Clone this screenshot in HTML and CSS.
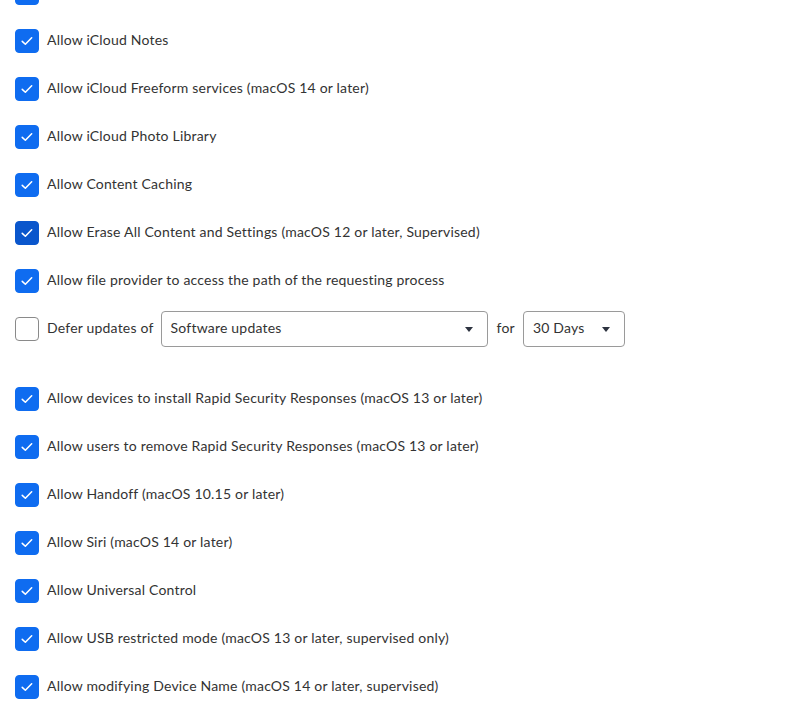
FILE: index.html
```html
<!DOCTYPE html>
<html>
<head>
<meta charset="utf-8">
<link rel="stylesheet" href="styles.css">
</head>
<body>
<div class="list">
  <div class="row"><span class="cb on"><svg viewBox="0 0 24 24"><path d="M6.8 12.4l3.4 3.1 6.9-7"/></svg></span></div>
  <div class="row"><span class="cb on"><svg viewBox="0 0 24 24"><path d="M6.8 12.4l3.4 3.1 6.9-7"/></svg></span><span class="label">Allow iCloud Notes</span></div>
  <div class="row"><span class="cb on"><svg viewBox="0 0 24 24"><path d="M6.8 12.4l3.4 3.1 6.9-7"/></svg></span><span class="label">Allow iCloud Freeform services (macOS 14 or later)</span></div>
  <div class="row"><span class="cb on"><svg viewBox="0 0 24 24"><path d="M6.8 12.4l3.4 3.1 6.9-7"/></svg></span><span class="label">Allow iCloud Photo Library</span></div>
  <div class="row"><span class="cb on"><svg viewBox="0 0 24 24"><path d="M6.8 12.4l3.4 3.1 6.9-7"/></svg></span><span class="label">Allow Content Caching</span></div>
  <div class="row"><span class="cb on focus"><svg viewBox="0 0 24 24"><path d="M6.8 12.4l3.4 3.1 6.9-7"/></svg></span><span class="label">Allow Erase All Content and Settings (macOS 12 or later, Supervised)</span></div>
  <div class="row"><span class="cb on"><svg viewBox="0 0 24 24"><path d="M6.8 12.4l3.4 3.1 6.9-7"/></svg></span><span class="label">Allow file provider to access the path of the requesting process</span></div>
  <div class="row defer">
    <span class="cb"></span><span class="label">Defer updates of</span>
    <div class="select wide"><span>Software updates</span><span class="caret"></span></div>
    <span class="label for">for</span>
    <div class="select narrow"><span>30 Days</span><span class="caret"></span></div>
  </div>
  <div class="row"><span class="cb on"><svg viewBox="0 0 24 24"><path d="M6.8 12.4l3.4 3.1 6.9-7"/></svg></span><span class="label">Allow devices to install Rapid Security Responses (macOS 13 or later)</span></div>
  <div class="row"><span class="cb on"><svg viewBox="0 0 24 24"><path d="M6.8 12.4l3.4 3.1 6.9-7"/></svg></span><span class="label">Allow users to remove Rapid Security Responses (macOS 13 or later)</span></div>
  <div class="row"><span class="cb on"><svg viewBox="0 0 24 24"><path d="M6.8 12.4l3.4 3.1 6.9-7"/></svg></span><span class="label">Allow Handoff (macOS 10.15 or later)</span></div>
  <div class="row"><span class="cb on"><svg viewBox="0 0 24 24"><path d="M6.8 12.4l3.4 3.1 6.9-7"/></svg></span><span class="label">Allow Siri (macOS 14 or later)</span></div>
  <div class="row"><span class="cb on"><svg viewBox="0 0 24 24"><path d="M6.8 12.4l3.4 3.1 6.9-7"/></svg></span><span class="label">Allow Universal Control</span></div>
  <div class="row"><span class="cb on"><svg viewBox="0 0 24 24"><path d="M6.8 12.4l3.4 3.1 6.9-7"/></svg></span><span class="label">Allow USB restricted mode (macOS 13 or later, supervised only)</span></div>
  <div class="row"><span class="cb on"><svg viewBox="0 0 24 24"><path d="M6.8 12.4l3.4 3.1 6.9-7"/></svg></span><span class="label">Allow modifying Device Name (macOS 14 or later, supervised)</span></div>
</div>
</body>
</html>
```
FILE: styles.css
```css
html, body {
  margin: 0;
  padding: 0;
  background: #ffffff;
  overflow: hidden;
}
body {
  font-family: Lato, "Open Sans", sans-serif;
  font-size: 14px;
  color: #333333;
}
.list {
  display: flex;
  flex-direction: column;
  margin-top: -31px;
  padding-left: 15px;
}
.row {
  height: 48px;
  display: flex;
  align-items: center;
  flex-shrink: 0;
}
.row.defer {
  margin-bottom: 22px;
}
.cb {
  width: 24px;
  height: 24px;
  box-sizing: border-box;
  border: 1px solid #8a8a8a;
  border-radius: 4px;
  background: #fff;
  flex-shrink: 0;
  display: flex;
  align-items: center;
  justify-content: center;
}
.cb.on {
  background: #0f6cf0;
  border-color: #0f6cf0;
}
.cb.focus {
  background: #0a56cc;
  border-color: #0a56cc;
}
.cb svg {
  width: 24px;
  height: 24px;
  fill: none;
  stroke: #ffffff;
  stroke-width: 1.7;
  stroke-linecap: round;
  stroke-linejoin: round;
}
.label {
  margin-left: 8px;
  margin-bottom: 4px;
  letter-spacing: 0.2px;
  white-space: nowrap;
}
.select {
  height: 36px;
  box-sizing: border-box;
  border: 1px solid #9a9a9a;
  border-radius: 4px;
  display: flex;
  align-items: center;
  justify-content: space-between;
  padding: 0 14px 4px 9px;
  letter-spacing: 0.2px;
}
.select .caret {
  margin-top: 4px;
}
.select.wide {
  width: 327px;
  margin-left: 7px;
}
.select.narrow {
  width: 102px;
  margin-left: 8px;
}
.label.for {
  margin-left: 9px;
}
.caret {
  width: 0;
  height: 0;
  border-left: 4px solid transparent;
  border-right: 4px solid transparent;
  border-top: 5px solid #2d3340;
}
```
